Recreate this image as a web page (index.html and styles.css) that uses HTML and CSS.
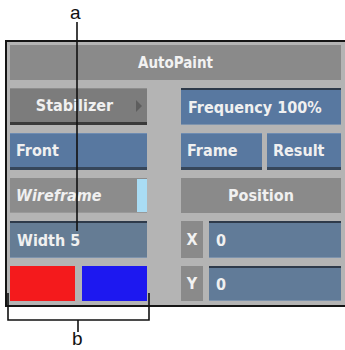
FILE: index.html
```html
<!DOCTYPE html>
<html lang="en">
<head>
    <meta charset="UTF-8">
    <title>AutoPaint</title>
    <link rel="stylesheet" href="styles.css">
</head>
<body>
    <div class="callout-top"><span class="callout-label">a</span></div>

    <div class="panel">
        <div class="title">AutoPaint</div>

        <div class="btn btn-gray btn-menu">Stabilizer<span class="arrow"></span></div>
        <div class="btn btn-blue field">Frequency 100%</div>

        <div class="btn btn-blue">Front</div>
        <div class="pair">
            <div class="btn btn-blue frame">Frame</div>
            <div class="btn btn-blue result">Result</div>
        </div>

        <div class="btn btn-gray wire">Wireframe<span class="swatch-strip"></span></div>
        <div class="header">Position</div>

        <div class="btn btn-slate field">Width 5</div>
        <div class="coord">
            <div class="axis">X</div>
            <div class="btn btn-blue field value">0</div>
        </div>

        <div class="colors">
            <div class="color red"></div>
            <div class="color blue"></div>
        </div>
        <div class="coord">
            <div class="axis">Y</div>
            <div class="btn btn-blue field value">0</div>
        </div>
    </div>

    <div class="callout-bottom"><span class="callout-label">b</span></div>

    <!-- leader lines for the callouts -->
    <svg class="leaders" width="345" height="350" viewBox="0 0 345 350">
        <line x1="77" y1="22" x2="77" y2="231" />
        <polyline points="8,293 8,320 149,320 149,293" />
        <line x1="78" y1="320" x2="78" y2="332" />
    </svg>
</body>
</html>
```

FILE: styles.css
```css
body {
    margin: 0;
    width: 345px;
    height: 350px;
    overflow: hidden;
    position: relative;
    background-color: #ffffff;
    font-family: "DejaVu Sans Condensed", "DejaVu Sans", sans-serif;
}

.callout-top {
    height: 40px;
    position: relative;
}

.callout-bottom {
    height: 43px;
    position: relative;
}

.callout-label {
    position: absolute;
    font-family: "Liberation Sans", Arial, sans-serif;
    font-size: 19px;
    color: #111;
    line-height: 1;
}

.callout-top .callout-label { left: 70px; top: 3px; }
.callout-bottom .callout-label { left: 72px; top: 22px; }

.leaders {
    position: absolute;
    left: 0;
    top: 0;
    fill: none;
    stroke: #111;
    stroke-width: 1.6;
}

.panel {
    margin-left: 5px;
    width: 345px;
    box-sizing: border-box;
    background-color: #b4b4b4;
    border-top: 2px solid #151515;
    border-left: 2px solid #151515;
    border-bottom: 2px solid #151515;
    padding: 3px 0 4px 3px;
    display: grid;
    grid-template-columns: 137px 160px;
    grid-template-rows: 35px 37px 37px 35px 37px 35px;
    column-gap: 34px;
    row-gap: 8px;
}

.title {
    grid-column: 1 / 3;
    background-color: #8a8a8a;
    color: #f2f2f2;
    font-weight: bold;
    font-size: 15px;
    display: flex;
    align-items: center;
    justify-content: center;
}

.btn {
    box-sizing: border-box;
    display: flex;
    align-items: center;
    color: #f0f0f0;
    font-weight: bold;
    font-size: 16px;
    padding-left: 6px;
    position: relative;
    white-space: nowrap;
}

.btn-gray {
    background-color: #7c7c7c;
    border-bottom: 3px solid #3a3a3a;
    border-top: 1px solid #8e8e8e;
}

.btn-blue {
    background-color: #5878a0;
    border-bottom: 3px solid #36465a;
    border-top: 1px solid #6e8cb2;
}

.btn-slate {
    background-color: #657c94;
    border-top: 2px solid #3c4858;
    border-bottom: 1px solid #7a8ea3;
}

.field {
    border-top: 2px solid #2e3a4a;
    border-bottom: 1px solid #7d93ad;
    padding-left: 7px;
}

.btn-menu {
    justify-content: center;
    padding-left: 0;
    padding-right: 8px;
}

.arrow {
    position: absolute;
    right: 5px;
    top: 11px;
    width: 0;
    height: 0;
    border-top: 6px solid transparent;
    border-bottom: 6px solid transparent;
    border-left: 6px solid #5e5e5e;
}

.wire {
    font-style: italic;
    background-color: #8c8c8c;
    border-bottom: 1px solid #999;
    border-top: 1px solid #8c8c8c;
}

.swatch-strip {
    position: absolute;
    right: 0;
    top: 0;
    bottom: 0;
    width: 10px;
    background-color: #a9dcf4;
}

.pair {
    display: flex;
    gap: 5px;
}

.frame { width: 81px; }
.result { flex: 1; }

.header {
    background-color: #8a8a8a;
    color: #f0f0f0;
    font-weight: bold;
    font-size: 16px;
    display: flex;
    align-items: center;
    justify-content: center;
}

.coord {
    display: flex;
    gap: 6px;
}

.axis {
    width: 22px;
    background-color: #8a8a8a;
    color: #f2f2f2;
    font-weight: bold;
    font-size: 16px;
    display: flex;
    align-items: center;
    justify-content: center;
}

.value {
    flex: 1;
    background-color: #617b98;
}

.colors {
    display: flex;
    gap: 7px;
}

.color { flex: 1; }
.red { background-color: #f41a1c; }
.blue { background-color: #1d18f0; }
```
